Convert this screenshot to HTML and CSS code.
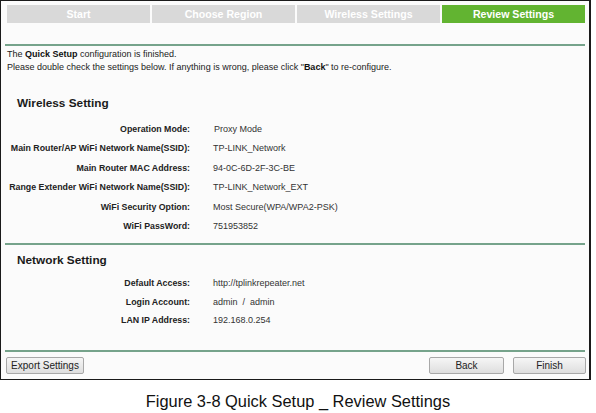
FILE: index.html
```html
<!DOCTYPE html>
<html>
<head>
<meta charset="utf-8">
<link rel="stylesheet" href="styles.css">
</head>
<body>
<div class="frame">
  <div class="tabs">
    <div class="tab">Start</div>
    <div class="tab">Choose Region</div>
    <div class="tab">Wireless Settings</div>
    <div class="tab active">Review Settings</div>
  </div>
  <div class="rule"></div>
  <div class="intro">
    <div>The <b>Quick Setup</b> configuration is finished.</div>
    <div>Please double check the settings below. If anything is wrong, please click "<b>Back</b>" to re-configure.</div>
  </div>
  <h2 class="section-title first">Wireless Setting</h2>
  <div class="grid wide">
    <div class="label">Operation Mode:</div><div class="value indent">Proxy Mode</div>
    <div class="label">Main Router/AP WiFi Network Name(SSID):</div><div class="value">TP-LINK_Network</div>
    <div class="label">Main Router MAC Address:</div><div class="value">94-0C-6D-2F-3C-BE</div>
    <div class="label">Range Extender WiFi Network Name(SSID):</div><div class="value">TP-LINK_Network_EXT</div>
    <div class="label">WiFi Security Option:</div><div class="value">Most Secure(WPA/WPA2-PSK)</div>
    <div class="label">WiFi PassWord:</div><div class="value">751953852</div>
  </div>
  <div class="rule sep1"></div>
  <h2 class="section-title">Network Setting</h2>
  <div class="grid narrow">
    <div class="label">Default Access:</div><div class="value">http://tplinkrepeater.net</div>
    <div class="label">Login Account:</div><div class="value">admin &nbsp;/ &nbsp;admin</div>
    <div class="label">LAN IP Address:</div><div class="value">192.168.0.254</div>
  </div>
  <div class="rule sep2"></div>
  <div class="actions">
    <button class="btn export">Export Settings</button>
    <div class="spacer"></div>
    <button class="btn">Back</button>
    <button class="btn finish">Finish</button>
  </div>
</div>
<div class="caption">Figure 3-8 Quick Setup _ Review Settings</div>
</body>
</html>
```
FILE: styles.css
```css
html, body {
  margin: 0;
  padding: 0;
  background: #ffffff;
  font-family: "Liberation Sans", Arial, sans-serif;
}
.frame {
  box-sizing: border-box;
  width: 591px;
  height: 380px;
  border: 1px solid #1a1a1a;
  border-right-width: 2px;
  background: #fbfbfb;
  padding: 4px 4px 0 4px;
  display: flex;
  flex-direction: column;
}
.tabs {
  display: flex;
  gap: 2px;
  margin-left: 2px;
  height: 18px;
}
.tab {
  flex: 1;
  background: #d9d9d9;
  color: #ffffff;
  font-weight: bold;
  font-size: 10.6px;
  line-height: 18px;
  text-align: center;
}
.tab.active {
  background: #62b431;
}
.rule {
  height: 2px;
  background: #76a38b;
  margin-top: 21px;
}
.intro {
  margin-top: 2px;
  padding-left: 2px;
  font-size: 9px;
  line-height: 13px;
  color: #222;
}
.intro b { color: #111; }
.section-title {
  margin: 21px 0 0 0;
  padding-left: 12px;
  font-size: 11.8px;
  line-height: 16px;
  font-weight: bold;
  color: #1a1a1a;
}
.section-title:not(.first) { margin-top: 7px; }
.grid {
  display: grid;
  grid-template-columns: 185px 1fr;
  column-gap: 23px;
  font-size: 9px;
  color: #333;
}
.grid.wide { grid-auto-rows: 19.5px; margin-top: 8px; }
.grid.narrow { grid-auto-rows: 18.5px; margin-top: 6px; }
.label {
  text-align: right;
  font-weight: bold;
  font-size: 8.8px;
  color: #222;
  white-space: nowrap;
  align-self: center;
}
.value {
  white-space: nowrap;
  align-self: center;
}
.value.indent { padding-left: 1px; }
.sep1 { margin-top: 7px; }
.sep2 { margin-top: 20px; }
.actions {
  display: flex;
  gap: 9px;
  margin-top: 5px;
  margin-right: -1px;
}
.spacer { flex: 1; }
.btn {
  box-sizing: border-box;
  height: 17px;
  width: 75px;
  padding: 0;
  font-family: "Liberation Sans", Arial, sans-serif;
  font-size: 10px;
  color: #222;
  background: linear-gradient(#f6f6f6, #dedede);
  border: 1px solid #a8a8a8;
  border-radius: 2px;
}
.btn.export { width: 78px; margin-left: 1px; }
.btn.finish { width: 73px; }
.caption {
  margin-top: 11px;
  text-align: center;
  font-size: 16.4px;
  line-height: 20px;
  color: #111;
}
```
